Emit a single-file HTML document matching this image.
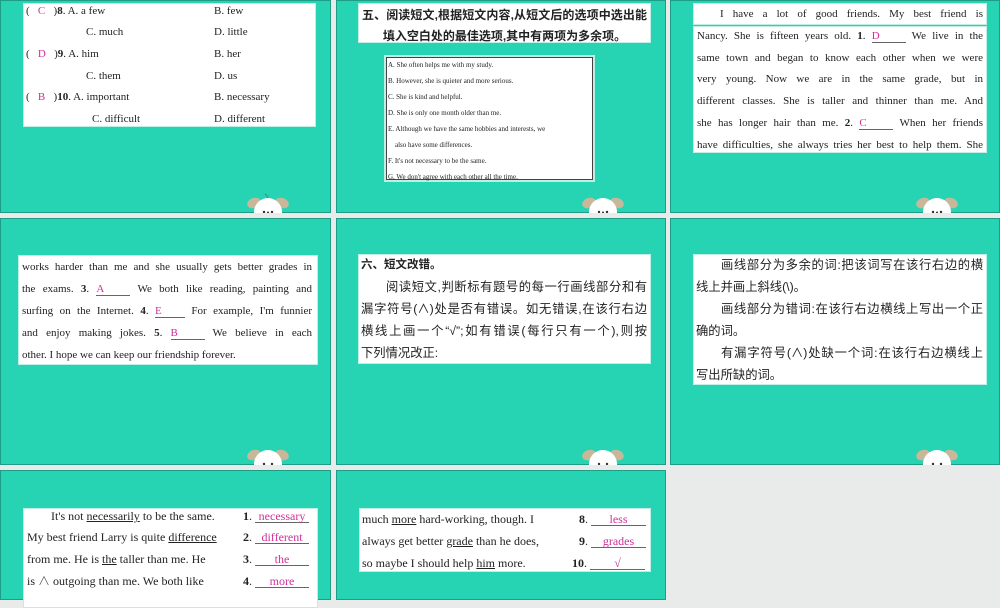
<!DOCTYPE html>
<html><head><meta charset="utf-8"><style>
*{margin:0;padding:0;box-sizing:border-box}
body{width:1000px;height:600px;background:#e9ebea;position:relative;overflow:hidden;font-family:"Liberation Serif","Noto Serif CJK SC",serif;color:#222}
.p{position:absolute;background:#26d4b4;border:1px solid #1d9c86}
.w{position:absolute;background:#fff;border:1px solid #bfeee4}
.l{position:absolute;white-space:nowrap;font-size:11px;line-height:14px}
.m{color:#d0309a}
.u{text-decoration:underline}
.bl{display:inline-block;border-bottom:1px solid #666;text-align:center;color:#d0309a;line-height:12px}
.cn{font-family:"Liberation Sans","Noto Sans CJK SC",sans-serif}
.j{text-align:justify;text-align-last:justify}
</style></head><body>
<div class="p" style="left:0;top:0;width:331px;height:213px"></div>
<div class="p" style="left:336px;top:0;width:330px;height:213px"></div>
<div class="p" style="left:670px;top:0;width:330px;height:213px"></div>
<div class="p" style="left:0;top:218px;width:331px;height:247px"></div>
<div class="p" style="left:336px;top:218px;width:330px;height:247px"></div>
<div class="p" style="left:670px;top:218px;width:330px;height:247px"></div>
<div class="p" style="left:0;top:470px;width:331px;height:130px"></div>
<div class="p" style="left:336px;top:470px;width:330px;height:130px"></div>

<svg style="position:absolute;left:245px;top:193px" width="45" height="20"><ellipse cx="9" cy="10" rx="7" ry="5" fill="#c9b79a" transform="rotate(-20 9 10)"/><ellipse cx="37" cy="10" rx="7" ry="5" fill="#c9b79a" transform="rotate(20 37 10)"/><circle cx="23" cy="19" r="14" fill="#fff"/><circle cx="19" cy="19" r="1.2" fill="#333"/><circle cx="27" cy="19" r="1.2" fill="#333"/><circle cx="23" cy="19.5" r="1" fill="#333"/><path d="M23 5 q-1 -3 -3 -4" stroke="#666" fill="none" stroke-width=".7"/></svg>
<svg style="position:absolute;left:580px;top:193px" width="45" height="20"><ellipse cx="9" cy="10" rx="7" ry="5" fill="#c9b79a" transform="rotate(-20 9 10)"/><ellipse cx="37" cy="10" rx="7" ry="5" fill="#c9b79a" transform="rotate(20 37 10)"/><circle cx="23" cy="19" r="14" fill="#fff"/><circle cx="19" cy="19" r="1.2" fill="#333"/><circle cx="27" cy="19" r="1.2" fill="#333"/><circle cx="23" cy="19.5" r="1" fill="#333"/></svg>
<svg style="position:absolute;left:914px;top:193px" width="45" height="20"><ellipse cx="9" cy="10" rx="7" ry="5" fill="#c9b79a" transform="rotate(-20 9 10)"/><ellipse cx="37" cy="10" rx="7" ry="5" fill="#c9b79a" transform="rotate(20 37 10)"/><circle cx="23" cy="19" r="14" fill="#fff"/><circle cx="19" cy="19" r="1.2" fill="#333"/><circle cx="27" cy="19" r="1.2" fill="#333"/><circle cx="23" cy="19.5" r="1" fill="#333"/></svg>
<svg style="position:absolute;left:245px;top:445px" width="45" height="20"><ellipse cx="9" cy="10" rx="7" ry="5" fill="#c9b79a" transform="rotate(-20 9 10)"/><ellipse cx="37" cy="10" rx="7" ry="5" fill="#c9b79a" transform="rotate(20 37 10)"/><circle cx="23" cy="19" r="14" fill="#fff"/><circle cx="19" cy="19" r="1.2" fill="#333"/><circle cx="27" cy="19" r="1.2" fill="#333"/></svg>
<svg style="position:absolute;left:580px;top:445px" width="45" height="20"><ellipse cx="9" cy="10" rx="7" ry="5" fill="#c9b79a" transform="rotate(-20 9 10)"/><ellipse cx="37" cy="10" rx="7" ry="5" fill="#c9b79a" transform="rotate(20 37 10)"/><circle cx="23" cy="19" r="14" fill="#fff"/><circle cx="19" cy="19" r="1.2" fill="#333"/><circle cx="27" cy="19" r="1.2" fill="#333"/></svg>
<svg style="position:absolute;left:914px;top:445px" width="45" height="20"><ellipse cx="9" cy="10" rx="7" ry="5" fill="#c9b79a" transform="rotate(-20 9 10)"/><ellipse cx="37" cy="10" rx="7" ry="5" fill="#c9b79a" transform="rotate(20 37 10)"/><circle cx="23" cy="19" r="14" fill="#fff"/><circle cx="19" cy="19" r="1.2" fill="#333"/><circle cx="27" cy="19" r="1.2" fill="#333"/></svg>

<!-- panel 1 -->
<div class="w" style="left:23px;top:3px;width:293px;height:124px"></div>
<div class="l" style="left:26px;top:4px">( &nbsp;&nbsp;<span class="m">C</span> &nbsp;&nbsp;)<b>8</b>. A. a few</div><div class="l" style="left:214px;top:4px">B. few</div>
<div class="l" style="left:86px;top:25px">C. much</div><div class="l" style="left:214px;top:25px">D. little</div>
<div class="l" style="left:26px;top:47px">( &nbsp;&nbsp;<span class="m">D</span> &nbsp;&nbsp;)<b>9</b>. A. him</div><div class="l" style="left:214px;top:47px">B. her</div>
<div class="l" style="left:86px;top:69px">C. them</div><div class="l" style="left:214px;top:69px">D. us</div>
<div class="l" style="left:26px;top:90px">( &nbsp;&nbsp;<span class="m">B</span> &nbsp;&nbsp;)<b>10</b>. A. important</div><div class="l" style="left:214px;top:90px">B. necessary</div>
<div class="l" style="left:92px;top:112px">C. difficult</div><div class="l" style="left:214px;top:112px">D. different</div>

<!-- panel 2 -->
<div class="w" style="left:358px;top:3px;width:293px;height:40px"></div>
<div class="l cn j" style="left:362px;width:285px;top:5px;font-size:12px;font-weight:bold;line-height:21px">五、阅读短文,根据短文内容,从短文后的选项中选出能</div>
<div class="l cn" style="left:358px;width:293px;text-align:center;top:26px;font-size:12px;font-weight:bold;line-height:21px">填入空白处的最佳选项,其中有两项为多余项。</div>
<div style="position:absolute;left:384px;top:55px;width:211px;height:127px;background:#fff;border:2px solid #bfeee4"></div>
<div style="position:absolute;left:386px;top:57px;width:207px;height:123px;border:1px solid #444"></div>
<div style="position:absolute;left:388px;top:57px;font-size:7px;line-height:16px;white-space:nowrap">A. She often helps me with my study.<br>B. However, she is quieter and more serious.<br>C. She is kind and helpful.<br>D. She is only one month older than me.<br>E. Although we have the same hobbies and interests, we<br>&nbsp;&nbsp;&nbsp;&nbsp;also have some differences.<br>F. It's not necessary to be the same.<br>G. We don't agree with each other all the time.</div>

<!-- panel 3 -->
<div class="w" style="left:693px;top:3px;width:294px;height:22px"></div>
<div class="w" style="left:693px;top:26px;width:294px;height:127px"></div>
<div class="l j" style="left:720px;width:263px;top:7px">I have a lot of good friends. My best friend is</div>
<div class="l j" style="left:697px;width:286px;top:29px">Nancy. She is fifteen years old. <b>1</b>. <span class="bl" style="width:34px">D</span> We live in the</div>
<div class="l j" style="left:697px;width:286px;top:51px">same town and began to know each other when we were</div>
<div class="l j" style="left:697px;width:286px;top:72px">very young. Now we are in the same grade, but in</div>
<div class="l j" style="left:697px;width:286px;top:94px">different classes. She is taller and thinner than me. And</div>
<div class="l j" style="left:697px;width:286px;top:116px">she has longer hair than me. <b>2</b>. <span class="bl" style="width:34px">C</span> When her friends</div>
<div class="l j" style="left:697px;width:286px;top:138px">have difficulties, she always tries her best to help them. She</div>

<!-- row2 panel1 -->
<div class="w" style="left:18px;top:255px;width:300px;height:110px"></div>
<div class="l j" style="left:22px;width:290px;top:260px">works harder than me and she usually gets better grades in</div>
<div class="l j" style="left:22px;width:290px;top:282px">the exams. <b>3</b>. <span class="bl" style="width:34px">A</span> We both like reading, painting and</div>
<div class="l j" style="left:22px;width:290px;top:304px">surfing on the Internet. <b>4</b>. <span class="bl" style="width:30px">E</span> For example, I'm funnier</div>
<div class="l j" style="left:22px;width:290px;top:326px">and enjoy making jokes. <b>5</b>. <span class="bl" style="width:34px">B</span> We believe in each</div>
<div class="l" style="left:22px;top:348px">other. I hope we can keep our friendship forever.</div>

<!-- row2 panel2 -->
<div class="w" style="left:358px;top:254px;width:293px;height:110px"></div>
<div class="l cn" style="left:361px;top:258px;font-size:11.5px;font-weight:bold">六、短文改错。</div>
<div class="l cn j" style="left:386px;width:261px;top:276px;font-size:12.3px;line-height:22px">阅读短文,判断标有题号的每一行画线部分和有</div>
<div class="l cn j" style="left:361px;width:286px;top:298px;font-size:12.3px;line-height:22px">漏字符号(∧)处是否有错误。如无错误,在该行右边</div>
<div class="l cn j" style="left:361px;width:286px;top:320px;font-size:12.3px;line-height:22px">横线上画一个“√”;如有错误(每行只有一个),则按</div>
<div class="l cn" style="left:361px;top:342px;font-size:12.3px;line-height:22px">下列情况改正:</div>

<!-- row2 panel3 -->
<div class="w" style="left:693px;top:254px;width:294px;height:131px"></div>
<div class="l cn j" style="left:721px;width:262px;top:254px;font-size:12.3px;line-height:22px">画线部分为多余的词:把该词写在该行右边的横</div>
<div class="l cn" style="left:696px;top:276px;font-size:12.3px;line-height:22px">线上并画上斜线(\)。</div>
<div class="l cn j" style="left:721px;width:262px;top:298px;font-size:12.3px;line-height:22px">画线部分为错词:在该行右边横线上写出一个正</div>
<div class="l cn" style="left:696px;top:320px;font-size:12.3px;line-height:22px">确的词。</div>
<div class="l cn j" style="left:721px;width:262px;top:342px;font-size:12.3px;line-height:22px">有漏字符号(∧)处缺一个词:在该行右边横线上</div>
<div class="l cn" style="left:696px;top:364px;font-size:12.3px;line-height:22px">写出所缺的词。</div>

<!-- row3 panel1 -->
<div class="w" style="left:23px;top:508px;width:295px;height:100px"></div>
<div class="l" style="left:51px;top:509px;font-size:12px">It's not <span class="u">necessarily</span> to be the same.</div>
<div class="l" style="left:27px;top:530px;font-size:12px">My best friend Larry is quite <span class="u">difference</span></div>
<div class="l" style="left:27px;top:552px;font-size:12px">from me. He is <span class="u">the</span> taller than me. He</div>
<div class="l" style="left:27px;top:574px;font-size:12px">is ∧ outgoing than me. We both like</div>
<div class="l" style="left:243px;top:509px;font-size:12px"><b>1</b>. <span class="bl" style="width:54px">necessary</span></div>
<div class="l" style="left:243px;top:530px;font-size:12px"><b>2</b>. <span class="bl" style="width:54px">different</span></div>
<div class="l" style="left:243px;top:552px;font-size:12px"><b>3</b>. <span class="bl" style="width:54px">the</span></div>
<div class="l" style="left:243px;top:574px;font-size:12px"><b>4</b>. <span class="bl" style="width:54px">more</span></div>

<!-- row3 panel2 -->
<div class="w" style="left:359px;top:508px;width:292px;height:64px"></div>
<div class="l" style="left:362px;top:512px;font-size:12px">much <span class="u">more</span> hard-working, though. I</div>
<div class="l" style="left:362px;top:534px;font-size:12px">always get better <span class="u">grade</span> than he does,</div>
<div class="l" style="left:362px;top:556px;font-size:12px">so maybe I should help <span class="u">him</span> more.</div>
<div class="l" style="left:579px;top:512px;font-size:12px"><b>8</b>. <span class="bl" style="width:55px">less</span></div>
<div class="l" style="left:579px;top:534px;font-size:12px"><b>9</b>. <span class="bl" style="width:55px">grades</span></div>
<div class="l" style="left:572px;top:556px;font-size:12px"><b>10</b>. <span class="bl" style="width:55px">√</span></div>
</body></html>
